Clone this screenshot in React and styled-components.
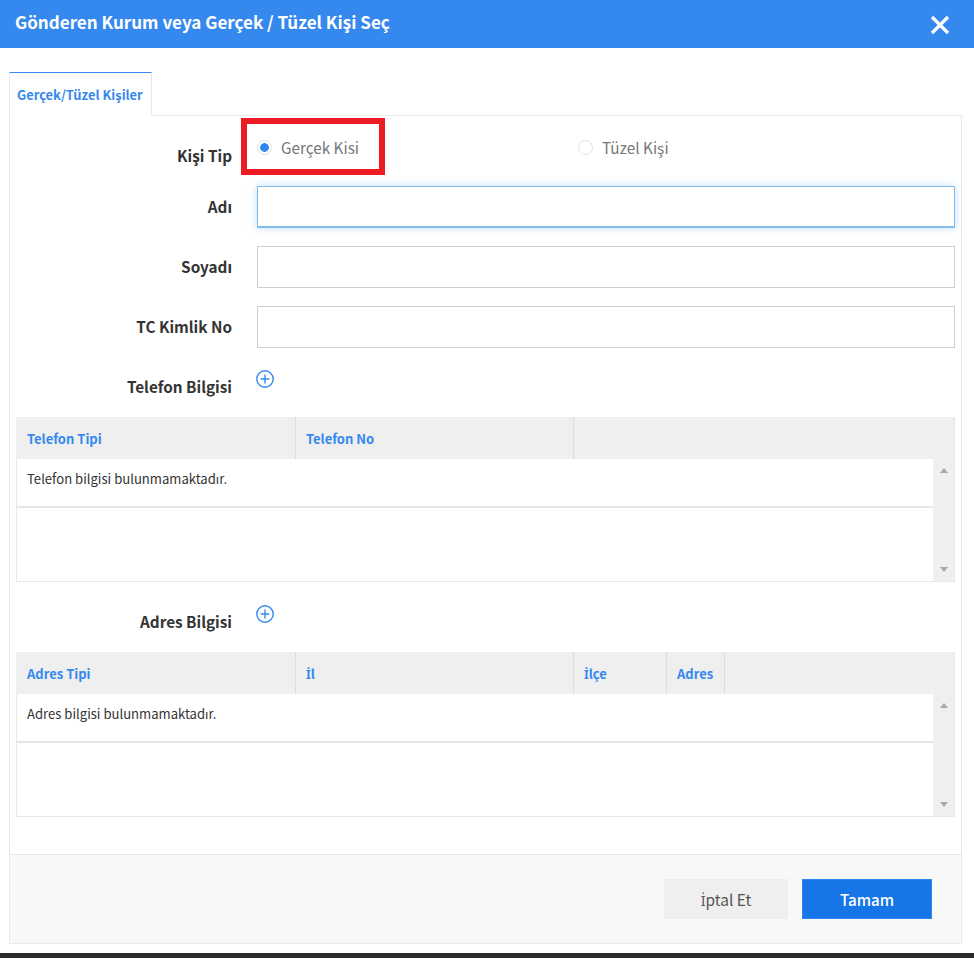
import React from 'react';
import styled, { createGlobalStyle } from 'styled-components';

const GlobalStyle = createGlobalStyle`
  html, body {
    margin: 0;
    padding: 0;
    background: #fff;
  }
  * {
    box-sizing: border-box;
  }
`;

const DottedI = styled.span`
  font-family: "Noto Sans", sans-serif;
  font-size: 0.93em;
`;

const phoneColumns = [
  { id: 'type', title: 'Telefon Tipi', width: 279 },
  { id: 'no', title: 'Telefon No', width: 278 },
];

const addressColumns = [
  { id: 'type', title: 'Adres Tipi', width: 279 },
  { id: 'city', title: <><DottedI>İ</DottedI>l</>, width: 278 },
  { id: 'town', title: <><DottedI>İ</DottedI>lçe</>, width: 93 },
  { id: 'address', title: 'Adres', width: 58 },
];

const PlusIcon = () => (
  <svg width="18" height="18" viewBox="0 0 18 18" fill="none" stroke="#3589ee" strokeWidth="1.4">
    <circle cx="9" cy="9" r="8.2" />
    <path d="M9 4.6v8.8M4.6 9h8.8" />
  </svg>
);

const CloseIcon = () => (
  <svg width="20" height="20" viewBox="0 0 20 20" fill="none" stroke="#fff" strokeWidth="3.2">
    <path d="M2 2l16 16M18 2L2 18" />
  </svg>
);

const GridTable = ({ columns, message }) => (
  <Table>
    <TableHead>
      {columns.map((col) => (
        <HeadCell key={col.id} $width={col.width}>{col.title}</HeadCell>
      ))}
    </TableHead>
    <TableBody>
      <TableRows>
        <EmptyRow>{message}</EmptyRow>
      </TableRows>
      <ScrollBar>
        <ArrowUp />
        <ArrowDown />
      </ScrollBar>
    </TableBody>
  </Table>
);

const App = () => (
  <Page>
    <GlobalStyle />
    <Header>
      <Title>Gönderen Kurum veya Gerçek / Tüzel Kişi Seç</Title>
      <CloseButton><CloseIcon /></CloseButton>
    </Header>

    <Content>
      <Tab>Gerçek/Tüzel Kişiler</Tab>
      <Panel>
        <Form>
          <RadioRow>
            <TypeLabel>Kişi Tip</TypeLabel>
            <RadioOption>
              <RadioDot $checked />
              <RadioText>Gerçek Kisi</RadioText>
            </RadioOption>
            <RadioOption>
              <RadioDot />
              <RadioText>Tüzel Kişi</RadioText>
            </RadioOption>
            <Highlight />
          </RadioRow>

          <FieldRow>
            <FieldLabel>Adı</FieldLabel>
            <TextInput $focused />
          </FieldRow>
          <FieldRow>
            <FieldLabel>Soyadı</FieldLabel>
            <TextInput />
          </FieldRow>
          <FieldRow>
            <FieldLabel>TC Kimlik No</FieldLabel>
            <TextInput />
          </FieldRow>

          <SectionRow>
            <SectionLabel>Telefon Bilgisi</SectionLabel>
            <AddButton><PlusIcon /></AddButton>
          </SectionRow>
          <GridTable columns={phoneColumns} message="Telefon bilgisi bulunmamaktadır." />

          <SectionRow>
            <SectionLabel>Adres Bilgisi</SectionLabel>
            <AddButton><PlusIcon /></AddButton>
          </SectionRow>
          <GridTable columns={addressColumns} message="Adres bilgisi bulunmamaktadır." />
        </Form>

        <Footer>
          <CancelButton><DottedI>İ</DottedI>ptal Et</CancelButton>
          <OkButton>Tamam</OkButton>
        </Footer>
      </Panel>
    </Content>

    <BottomStrip />
  </Page>
);

export default App;

const Page = styled.div`
  width: 974px;
  height: 958px;
  display: flex;
  flex-direction: column;
  overflow: hidden;
  background: #fff;
  font-family: "Noto Sans CJK SC", "Noto Sans", sans-serif;
`;

const Header = styled.div`
  height: 48px;
  flex-shrink: 0;
  display: flex;
  justify-content: space-between;
  padding: 0 24px 0 15px;
  background: #3589ee;
  border-bottom: 1px solid #2f86f0;
`;

const Title = styled.div`
  margin-top: 9px;
  font-size: 17.05px;
  line-height: 26px;
  font-weight: 700;
  color: #fff;
`;

const CloseButton = styled.div`
  margin-top: 15px;
  width: 20px;
  height: 20px;
`;

const Content = styled.div`
  flex: 1;
  display: flex;
  flex-direction: column;
  align-items: flex-start;
  padding: 24px 12px 9px 9px;
`;

const Tab = styled.div`
  width: 143px;
  height: 44px;
  margin-bottom: -1px;
  position: relative;
  z-index: 1;
  padding: 12px 0 0 7px;
  font-size: 12.9px;
  line-height: 20px;
  font-weight: 700;
  color: #3589ee;
  background: #fff;
  border-top: 1px solid #3589ee;
  border-left: 1px solid #e9e9e9;
  border-right: 1px solid #e9e9e9;
`;

const Panel = styled.div`
  width: 953px;
  flex: 1;
  display: flex;
  flex-direction: column;
  border: 1px solid #e9e9e9;
`;

const Form = styled.div`
  flex: 1;
  display: flex;
  flex-direction: column;
  padding: 0 6px;
`;

const RadioRow = styled.div`
  position: relative;
  height: 70px;
  display: flex;
  align-items: flex-start;
`;

const TypeLabel = styled.div`
  width: 216px;
  margin: 28px 25px 0 0;
  text-align: right;
  font-size: 15.3px;
  line-height: 22px;
  font-weight: 700;
  color: #333;
`;

const RadioOption = styled.div`
  width: 321px;
  margin-top: 21px;
  display: flex;
  align-items: center;
  gap: 9px;
`;

const RadioDot = styled.span`
  width: 15px;
  height: 15px;
  flex-shrink: 0;
  border-radius: 50%;
  border: 1px solid #e2e2e2;
  background: radial-gradient(circle, ${(p) => (p.$checked ? '#2f86f0 0, #2f86f0 4px, #fff 4.6px' : '#fff 0, #fff 100%')});
`;

const RadioText = styled.span`
  margin-top: -1px;
  font-size: 15.3px;
  line-height: 22px;
  color: #777;
`;

// the red marker drawn over the screenshot
const Highlight = styled.div`
  position: absolute;
  left: 225px;
  top: 2px;
  width: 144px;
  height: 57px;
  border: 6px solid #ed1c24;
  pointer-events: none;
`;

const FieldRow = styled.div`
  display: flex;
  align-items: center;
  height: 42px;
  margin-bottom: 18px;
`;

const FieldLabel = styled.div`
  width: 216px;
  margin-right: 25px;
  padding-bottom: 2px;
  text-align: right;
  font-size: 15.3px;
  line-height: 22px;
  font-weight: 700;
  color: #333;
`;

const TextInput = styled.div`
  width: 698px;
  height: 42px;
  background: #fff;
  border: 1px solid ${(p) => (p.$focused ? '#7fbdec' : '#cfcfcf')};
  border-bottom-width: ${(p) => (p.$focused ? '2px' : '1px')};
  box-shadow: ${(p) => (p.$focused ? '0 0 8px rgba(120, 185, 240, 0.45)' : 'none')};
`;

const SectionRow = styled.div`
  height: 51px;
  display: flex;
  align-items: flex-start;
`;

const SectionLabel = styled.div`
  width: 216px;
  margin: 9px 25px 0 0;
  text-align: right;
  font-size: 15.3px;
  line-height: 22px;
  font-weight: 700;
  color: #333;
`;

const AddButton = styled.div`
  margin: 3px 0 0 -1px;
  width: 18px;
  height: 18px;
`;

const Table = styled.div`
  width: 939px;
  height: 165px;
  margin-bottom: 19px;
  display: flex;
  flex-direction: column;
  border: 1px solid #e8e8e8;
  border-top: 0;
`;

const TableHead = styled.div`
  height: 42px;
  flex-shrink: 0;
  display: flex;
  background: #efefef;
  margin: 0 0 0 -1px;
  padding-left: 1px;
`;

const HeadCell = styled.div`
  width: ${(p) => p.$width}px;
  padding: 1px 0 0 10px;
  font-size: 13px;
  line-height: 42px;
  font-weight: 700;
  color: #3589ee;
  border-right: 1px solid #dcdcdc;
`;

const TableBody = styled.div`
  flex: 1;
  display: flex;
`;

const TableRows = styled.div`
  flex: 1;
`;

const EmptyRow = styled.div`
  height: 49px;
  padding: 10px 0 0 10px;
  font-size: 13.1px;
  line-height: 20px;
  color: #333;
  border-bottom: 2px solid #e6e6e6;
`;

const ScrollBar = styled.div`
  width: 21px;
  display: flex;
  flex-direction: column;
  justify-content: space-between;
  align-items: center;
  padding: 9px 0;
  background: #efefef;
`;

const ArrowUp = styled.span`
  border-left: 4.5px solid transparent;
  border-right: 4.5px solid transparent;
  border-bottom: 5px solid #a8a8a8;
`;

const ArrowDown = styled.span`
  border-left: 4.5px solid transparent;
  border-right: 4.5px solid transparent;
  border-top: 5px solid #a8a8a8;
`;

const Footer = styled.div`
  height: 89px;
  flex-shrink: 0;
  display: flex;
  justify-content: flex-end;
  align-items: flex-start;
  gap: 14px;
  padding: 24px 29px 0 0;
  background: #f8f8f8;
  border-top: 1px solid #e9e9e9;
`;

const CancelButton = styled.div`
  width: 124px;
  height: 40px;
  text-align: center;
  font-size: 15.4px;
  line-height: 40px;
  color: #555;
  background: #efefef;
`;

const OkButton = styled.div`
  width: 130px;
  height: 40px;
  text-align: center;
  font-size: 15.2px;
  line-height: 38px;
  font-weight: 500;
  color: #fff;
  background: #1676e8;
  border: 1px solid #2f86f0;
`;

const BottomStrip = styled.div`
  height: 5px;
  flex-shrink: 0;
  background: #2b2b2b;
`;
